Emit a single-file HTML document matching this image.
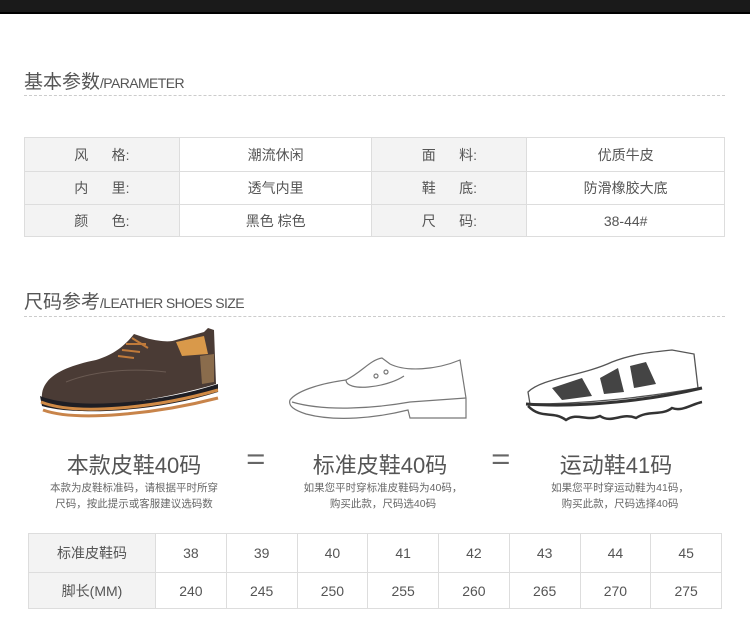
<!DOCTYPE html>
<html><head><meta charset="utf-8"><style>
*{margin:0;padding:0;box-sizing:border-box}
body{width:750px;height:625px;background:#fff;position:relative;overflow:hidden;font-family:"Liberation Sans","Noto Sans CJK SC",sans-serif;color:#555}
.abs{position:absolute}
.bar{left:0;top:0;width:750px;height:14px;background:#1a1a1a;border-bottom:2px solid #000}
.title{left:24px;font-size:19px;color:#555;white-space:nowrap}
.title small{font-size:14px;letter-spacing:-0.6px}
.dash{left:24px;width:701px;border-top:1px dashed #ccc}
table{border-collapse:collapse;position:absolute}
td{border:1px solid #ddd;text-align:center;font-size:14px;color:#555}
td.g{background:#f3f3f3}
.big{font-size:22px;color:#555;white-space:nowrap;text-align:center}
.eq{font-size:30px;color:#666;transform:scaleX(1.1)}
.sm{font-size:10.5px;color:#666;text-align:center;line-height:16px;white-space:nowrap}
</style></head><body>
<div class="abs bar"></div>
<div class="abs title" style="top:67px">基本参数<small>/PARAMETER</small></div>
<div class="abs dash" style="top:95px"></div>
<table style="left:24px;top:137px;width:701px">
<colgroup><col style="width:155px"><col style="width:193px"><col style="width:155px"><col style="width:198px"></colgroup>
<tr style="height:34px"><td class="g">风&nbsp;&nbsp;&nbsp;&nbsp;&nbsp;&nbsp;格:</td><td>潮流休闲</td><td class="g">面&nbsp;&nbsp;&nbsp;&nbsp;&nbsp;&nbsp;料:</td><td>优质牛皮</td></tr>
<tr style="height:33px"><td class="g">内&nbsp;&nbsp;&nbsp;&nbsp;&nbsp;&nbsp;里:</td><td>透气内里</td><td class="g">鞋&nbsp;&nbsp;&nbsp;&nbsp;&nbsp;&nbsp;底:</td><td>防滑橡胶大底</td></tr>
<tr style="height:32px"><td class="g">颜&nbsp;&nbsp;&nbsp;&nbsp;&nbsp;&nbsp;色:</td><td>黑色 棕色</td><td class="g">尺&nbsp;&nbsp;&nbsp;&nbsp;&nbsp;&nbsp;码:</td><td>38-44#</td></tr>
</table>
<div class="abs title" style="top:287px">尺码参考<small>/LEATHER SHOES SIZE</small></div>
<div class="abs dash" style="top:316px"></div>

<svg class="abs" style="left:36px;top:326px" width="190" height="100" viewBox="0 0 190 100">
<path d="M6 68 C8 50 30 40 60 34 C80 28 90 18 98 8 L110 12 C125 16 135 16 140 14 L168 6 L172 2 L178 4 L180 58 C140 70 90 78 50 82 C20 84 4 80 6 68Z" fill="#4a3b35"/>
<path d="M140 16 L168 10 L172 28 L146 30Z" fill="#d9994a"/>
<path d="M164 30 L178 28 L178 56 L166 58Z" fill="#8a6c4c"/>
<path d="M4 70 C40 84 120 78 182 58 L182 66 C120 86 40 90 6 80Z" fill="#1e1e24"/>
<path d="M5 76 C40 90 120 82 182 64" stroke="#d08a45" stroke-width="3" fill="none"/>
<path d="M7 84 C40 96 120 88 182 72" stroke="#c8844a" stroke-width="3" fill="none"/>
<path d="M96 12 L112 22 M90 18 L110 18 M86 24 L104 26 M82 30 L98 32" stroke="#c07a3a" stroke-width="2"/>
<path d="M30 56 C60 44 100 42 130 46" stroke="#6a5a52" stroke-width="1" fill="none"/>
</svg>

<svg class="abs" style="left:286px;top:352px" width="186" height="76" viewBox="0 0 186 76" fill="none" stroke="#777" stroke-width="1.2">
<path d="M4 48 C10 40 30 32 60 28 C76 20 84 8 96 6 L104 12 C120 20 150 18 174 8 L180 46 L180 66 L124 66 L122 58 C90 66 50 70 20 62 C8 58 2 54 4 48Z"/>
<path d="M6 50 C40 60 90 56 124 50 L180 46"/>
<path d="M60 28 C60 40 100 36 118 24"/>
<circle cx="90" cy="24" r="2"/><circle cx="100" cy="20" r="2"/>
</svg>

<svg class="abs" style="left:522px;top:348px" width="182" height="82" viewBox="0 0 182 82">
<path d="M6 44 C20 30 60 28 90 14 C110 6 130 4 150 2 L172 6 L176 40 C120 50 60 56 8 56Z" fill="#fff" stroke="#555" stroke-width="1.3"/>
<path d="M30 40 L60 30 L70 48 L40 52Z M78 30 L96 20 L102 44 L82 46Z M108 18 L124 14 L134 36 L112 40Z" fill="#444"/>
<path d="M4 56 C60 60 130 52 180 40" stroke="#333" stroke-width="3" fill="none"/>
<path d="M6 58 C20 72 30 62 44 72 C56 64 64 74 78 68 C90 76 100 64 114 70 C126 62 140 68 150 60 C160 64 170 56 180 54" stroke="#333" stroke-width="2.5" fill="none"/>
</svg>

<div class="abs big" style="left:44px;width:180px;top:448px">本款皮鞋40码</div>
<div class="abs big eq" style="left:247px;top:443px">=</div>
<div class="abs big" style="left:290px;width:180px;top:448px">标准皮鞋40码</div>
<div class="abs big eq" style="left:492px;top:443px">=</div>
<div class="abs big" style="left:526px;width:180px;top:448px">运动鞋41码</div>
<div class="abs sm" style="left:34px;width:200px;top:480px">本款为皮鞋标准码，请根据平时所穿<br>尺码，按此提示或客服建议选码数</div>
<div class="abs sm" style="left:283px;width:200px;top:480px">如果您平时穿标准皮鞋码为40码，<br>购买此款，尺码选40码</div>
<div class="abs sm" style="left:520px;width:200px;top:480px">如果您平时穿运动鞋为41码，<br>购买此款，尺码选择40码</div>

<table style="left:28px;top:533px;width:694px">
<colgroup><col style="width:127px"><col span="8"></colgroup>
<tr style="height:39px"><td class="g">标准皮鞋码</td><td>38</td><td>39</td><td>40</td><td>41</td><td>42</td><td>43</td><td>44</td><td>45</td></tr>
<tr style="height:36px"><td class="g">脚长(MM)</td><td>240</td><td>245</td><td>250</td><td>255</td><td>260</td><td>265</td><td>270</td><td>275</td></tr>
</table>
</body></html>
